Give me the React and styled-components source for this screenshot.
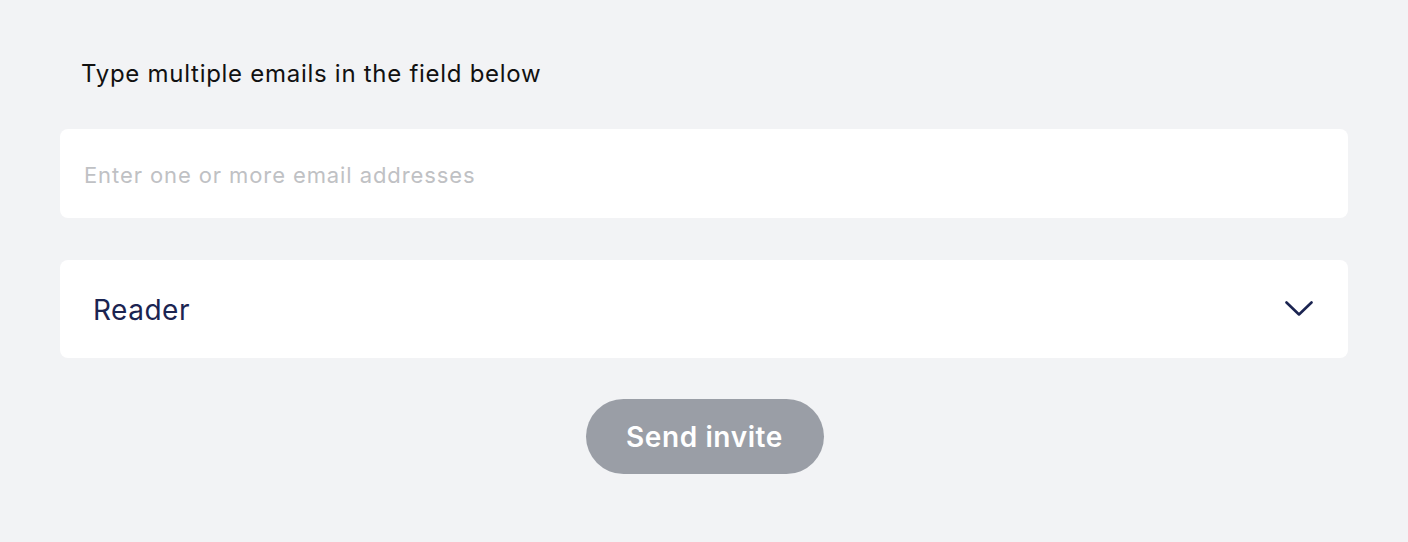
import React from 'react';
import styled, { createGlobalStyle } from 'styled-components';

const Global = createGlobalStyle`
  html, body {
    margin: 0;
    padding: 0;
    background: #f2f3f5;
    font-family: Inter, "Liberation Sans", sans-serif;
  }
`;

const Page = styled.div`
  box-sizing: border-box;
  width: 1408px;
  height: 542px;
  padding: 56px 60px 0 60px;
  display: flex;
  flex-direction: column;
`;

const Label = styled.div`
  font-size: 24px;
  line-height: 36px;
  letter-spacing: 0.72px;
  color: #111;
  padding-left: 21px;
  margin-bottom: 37px;
`;

const Field = styled.div`
  box-sizing: border-box;
  background: #fff;
  border-radius: 8px;
  height: ${p => p.h}px;
  display: flex;
  align-items: center;
  justify-content: space-between;
  padding: 0 ${p => p.pr}px 0 ${p => p.pl}px;
  margin-bottom: ${p => p.mb}px;
`;

const Placeholder = styled.span`
  font-size: 22px;
  letter-spacing: 0.9px;
  color: #bfc1c4;
  padding-top: 2px;
`;

const Value = styled.span`
  font-size: 28px;
  letter-spacing: 0.5px;
  color: #1b2451;
  padding-top: 2px;
`;

const Chevron = () => (
  <svg width="28" height="16" viewBox="0 0 28 16" fill="none">
    <path d="M1.5 1.5 L14 13.5 L26.5 1.5" stroke="#1b2451" strokeWidth="2.6" strokeLinecap="round" strokeLinejoin="round" />
  </svg>
);

const ButtonRow = styled.div`
  display: flex;
  justify-content: center;
`;

const Button = styled.button`
  width: 238px;
  height: 75px;
  border: none;
  border-radius: 38px;
  background: #9a9ea6;
  color: #fff;
  font-family: Inter, "Liberation Sans", sans-serif;
  font-size: 28px;
  font-weight: 600;
  letter-spacing: 0.6px;
  padding-top: 2px;
  margin-left: 1px;
`;

export default function App() {
  return (
    <Page>
      <Global />
      <Label>Type multiple emails in the field below</Label>
      <Field h={89} pl={24} pr={35} mb={42}>
        <Placeholder>Enter one or more email addresses</Placeholder>
      </Field>
      <Field h={98} pl={33} pr={35} mb={41}>
        <Value>Reader</Value>
        <Chevron />
      </Field>
      <ButtonRow>
        <Button>Send invite</Button>
      </ButtonRow>
    </Page>
  );
}
